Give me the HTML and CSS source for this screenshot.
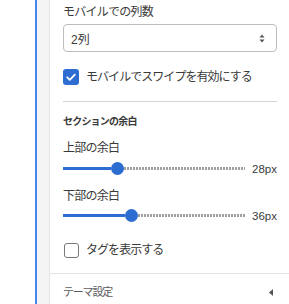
FILE: index.html
```html
<!DOCTYPE html>
<html lang="ja">
<head>
    <meta charset="UTF-8">
    <meta name="viewport" content="width=device-width, initial-scale=1.0">
    <title>テーマ設定</title>
    <link rel="stylesheet" href="styles.css">
</head>
<body>
    <div class="layout">
        <div class="gutter"></div>
        <div class="rail"></div>

        <div class="panel">
            <div class="panel-body">
                <!-- モバイル表示 -->
                <label class="field-label">モバイルでの列数</label>
                <div class="select">
                    <span class="select-value">2列</span>
                    <svg class="select-arrows" width="6" height="9" viewBox="0 0 6 9">
                        <path d="M3 0.5 L5.5 3.5 L0.5 3.5 Z M3 8.5 L5.5 5.5 L0.5 5.5 Z" fill="#555"/>
                    </svg>
                </div>

                <div class="check-row first">
                    <span class="checkbox checked">
                        <svg width="16" height="16" viewBox="0 0 16 16">
                            <path d="M4.2 8.3 L6.8 10.8 L11.8 5.6" fill="none" stroke="#fff" stroke-width="1.8" stroke-linecap="round" stroke-linejoin="round"/>
                        </svg>
                    </span>
                    <span class="check-label">モバイルでスワイプを有効にする</span>
                </div>

                <div class="divider"></div>

                <!-- セクションの余白 -->
                <div class="section-title">セクションの余白</div>

                <label class="field-label top-label">上部の余白</label>
                <div class="slider first-slider">
                    <div class="slider-fill" style="width: 48px"></div>
                    <div class="slider-thumb"></div>
                    <div class="slider-rest"></div>
                    <span class="slider-value">28px</span>
                </div>

                <label class="field-label bottom-label">下部の余白</label>
                <div class="slider second-slider">
                    <div class="slider-fill" style="width: 62px"></div>
                    <div class="slider-thumb"></div>
                    <div class="slider-rest"></div>
                    <span class="slider-value">36px</span>
                </div>

                <div class="check-row last">
                    <span class="checkbox"></span>
                    <span class="check-label">タグを表示する</span>
                </div>
            </div>

            <div class="panel-footer">
                <span class="footer-title">テーマ設定</span>
                <svg class="footer-arrow" width="4" height="7" viewBox="0 0 4 7">
                    <path d="M4 0 L0 3.5 L4 7 Z" fill="#555"/>
                </svg>
            </div>
        </div>
    </div>
</body>
</html>
```

FILE: styles.css
```css
:root {
    --blue: #2d6dd2;
    --accent: #4688f1;
    --text: #3a3a3a;
    --muted: #5c5c5c;
    --line: #d4d4d4;
}

body {
    margin: 0;
    font-family: "Liberation Sans", "Noto Sans CJK JP", sans-serif;
    color: var(--text);
    background: #fff;
}

.layout {
    display: flex;
    min-height: 304px;
}

/* 左側 */
.gutter {
    width: 35px;
}

.rail {
    width: 12px;
    background: #f4f4f4;
    border-left: 2px solid var(--accent);
    border-right: 1px solid #e4e4e4;
}

/* 設定パネル */
.panel {
    flex: 1;
    display: flex;
    flex-direction: column;
}

.panel-body {
    padding: 4px 12px 15px 13px;
}

.field-label {
    display: block;
    font-size: 12px;
    line-height: 16px;
    letter-spacing: -0.75px;
}

.select {
    margin-top: 4px;
    height: 28px;
    box-sizing: border-box;
    border: 1px solid #bdbdbd;
    border-radius: 4px;
    display: flex;
    align-items: center;
    justify-content: space-between;
    padding: 0 11px 0 7px;
    font-size: 12px;
}

.check-row {
    display: flex;
    align-items: center;
    gap: 7px;
}

.check-row.first {
    margin-top: 17px;
}

.check-row.last {
    margin-top: 20px;
    padding-left: 1px;
}

.checkbox {
    width: 15px;
    height: 15px;
    box-sizing: border-box;
    border: 1.5px solid #777;
    border-radius: 3px;
    display: flex;
}

.checkbox.checked {
    width: 16px;
    height: 16px;
    border: none;
    background: var(--blue);
}

.check-label {
    font-size: 12px;
    line-height: 16px;
    letter-spacing: -0.95px;
}

.divider {
    margin-top: 16px;
    height: 1px;
    background: var(--line);
}

.section-title {
    margin-top: 13px;
    font-size: 10px;
    line-height: 14px;
    font-weight: 700;
    letter-spacing: -0.8px;
}

.top-label {
    margin-top: 11px;
}

.bottom-label {
    margin-top: 13px;
}

/* スライダー */
.slider {
    display: flex;
    align-items: center;
    height: 13px;
}

.first-slider {
    margin-top: 6px;
}

.second-slider {
    margin-top: 5px;
}

.slider-fill {
    height: 3px;
    background: var(--blue);
}

.slider-thumb {
    width: 13px;
    height: 13px;
    border-radius: 50%;
    background: var(--blue);
}

.slider-rest {
    flex: 1;
    height: 3px;
    background: repeating-linear-gradient(90deg, #a0a0a0 0 2px, transparent 2px 3px);
}

.slider-value {
    margin-left: 7px;
    font-size: 11.5px;
}

/* フッター */
.panel-footer {
    border-top: 1px solid #e2e2e2;
    padding: 11px 16px 0 13px;
    display: flex;
    align-items: center;
    justify-content: space-between;
}

.footer-title {
    font-size: 11px;
    line-height: 14px;
    color: var(--muted);
    letter-spacing: -1.2px;
}
```
